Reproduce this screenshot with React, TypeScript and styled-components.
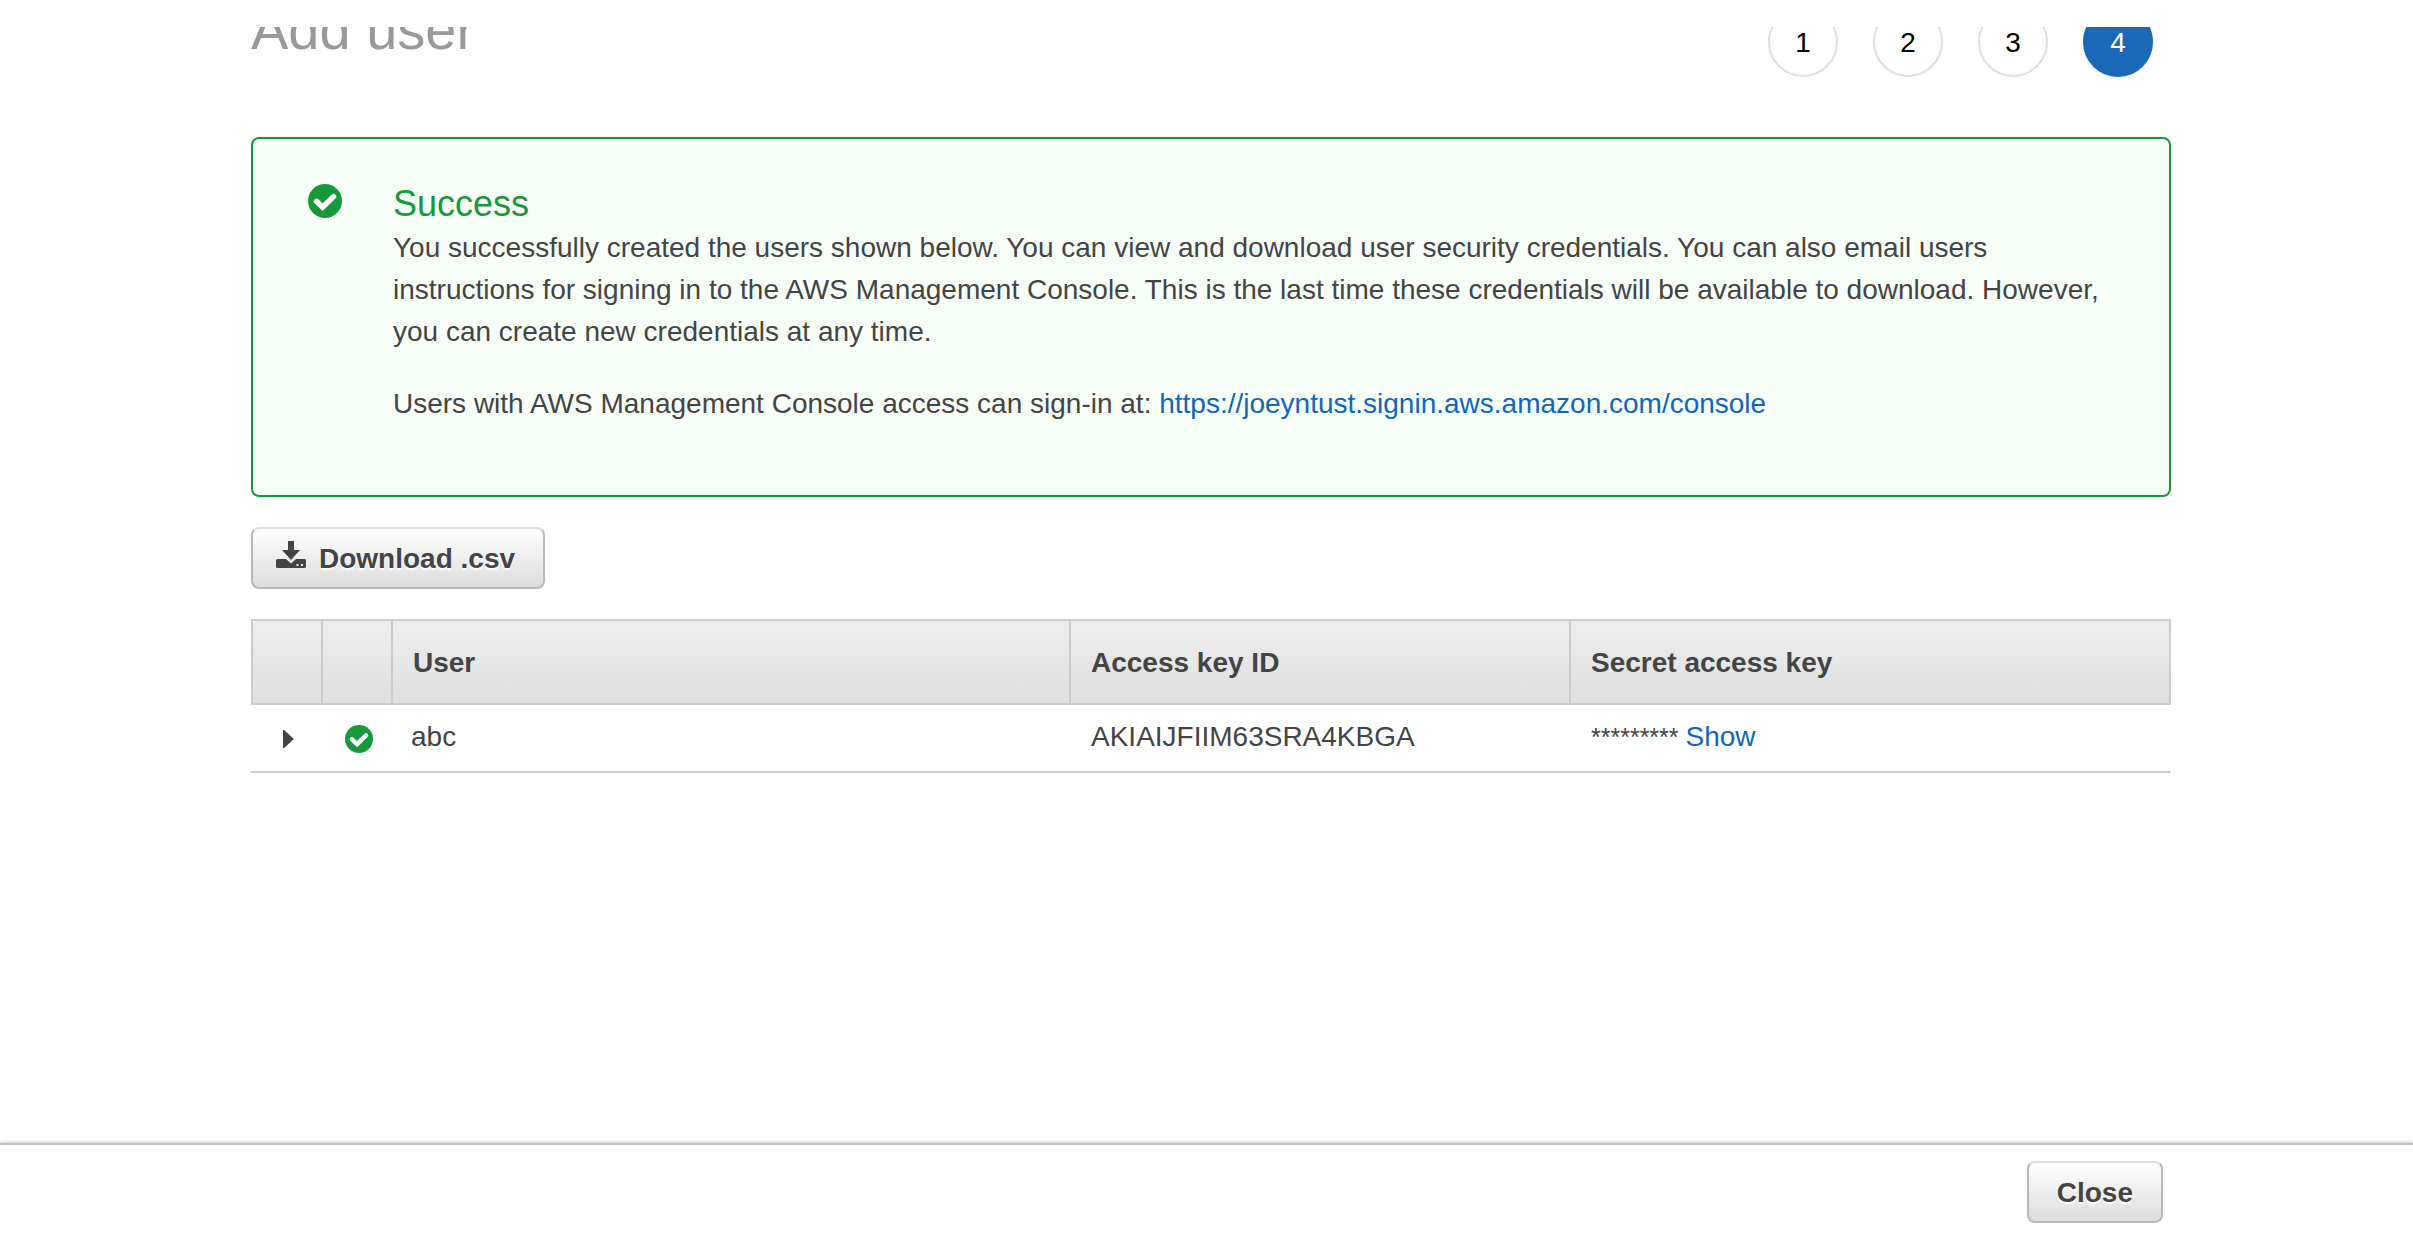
import React, { useState } from "react";
import styled, { createGlobalStyle, css } from "styled-components";

const color = {
  text: "#444444",
  link: "#1166bb",
  success: "#16993a",
  line: "#cccccc",
};

const GlobalStyle = createGlobalStyle`
  *, *::before, *::after { box-sizing: border-box; }
  body {
    margin: 0;
    background: #ffffff;
    color: ${color.text};
    font: 28px/42px "Liberation Sans", Arial, sans-serif;
  }
`;

const Page = styled.div`
  display: flex;
  flex-direction: column;
  height: 100vh;
  padding-top: 27px;
`;

const ScrollArea = styled.main`
  flex: 1;
  min-height: 0;
  overflow: hidden;
  padding: 0 242px 0 251px;
`;

const Header = styled.header`
  display: flex;
  justify-content: space-between;
  align-items: flex-start;
  margin-top: -20px;
  margin-bottom: 60px;
`;

const Title = styled.h1`
  margin: 0;
  color: #999999;
  font-size: 56px;
  font-weight: 400;
  line-height: 46px;
`;

const Steps = styled.ol`
  display: flex;
  gap: 35px;
  margin: 0;
  padding: 0 18px 0 0;
  list-style: none;
`;

const Step = styled.li<{ $active?: boolean }>`
  display: flex;
  align-items: center;
  justify-content: center;
  width: 70px;
  height: 70px;
  padding-top: 2px;
  border: 2px solid #e0e0e0;
  border-radius: 50%;
  color: #000000;
  ${(p) =>
    p.$active &&
    css`
      border-color: #1a69b9;
      background: #1a69b9;
      color: #ffffff;
    `}
`;

const Alert = styled.section`
  display: grid;
  grid-template-columns: 34px 1fr;
  column-gap: 51px;
  padding: 41px 40px 70px 55px;
  border: 2px solid ${color.success};
  border-radius: 8px;
  background: #f7fff8;
`;

const AlertIcon = styled.div`
  display: flex;
  padding-top: 4px;
  height: 38px;
`;

const AlertTitle = styled.h2`
  margin: 0;
  color: ${color.success};
  font-size: 36px;
  font-weight: 400;
  line-height: 47px;
`;

const Paragraph = styled.p`
  margin: 0;
  & + & {
    margin-top: 30px;
  }
`;

const Link = styled.a`
  color: ${color.link};
  text-decoration: none;
`;

const Button = styled.button`
  display: inline-flex;
  align-items: center;
  gap: 13px;
  height: 62px;
  padding: 2px 28px 0;
  border: 2px solid #b8b8b8;
  border-top-color: #dddddd;
  border-radius: 8px;
  background: linear-gradient(#ffffff, #dddddd);
  color: ${color.text};
  font: bold 28px/42px "Liberation Sans", Arial, sans-serif;
  text-shadow: 0 2px 2px #ffffff;
  cursor: pointer;
`;

const DownloadButton = styled(Button)`
  padding-left: 23px;
`;

const Toolbar = styled.div`
  display: flex;
  margin: 30px 0;
`;

const Table = styled.table`
  width: 100%;
  table-layout: fixed;
  border-collapse: separate;
  border-spacing: 0;
`;

const IconColumn = styled.col`
  width: 70px;
`;

const KeyColumn = styled.col`
  width: 500px;
`;

const SecretColumn = styled.col`
  width: 602px;
`;

const HeadRow = styled.tr`
  background: linear-gradient(#eeeeee, #dfdfdf);
`;

const HeadCell = styled.th`
  height: 86px;
  padding: 2px 20px 0;
  border: 2px solid ${color.line};
  border-right-width: 0;
  text-align: left;
  &:last-child {
    border-right-width: 2px;
  }
`;

const Cell = styled.td<{ $indent?: number }>`
  height: 68px;
  padding: 0 0 2px ${(p) => p.$indent ?? 22}px;
  border-bottom: 2px solid ${color.line};
`;

const Expander = styled.button`
  display: flex;
  padding: 4px 0 0;
  border: 0;
  background: none;
  color: ${color.text};
  cursor: pointer;
`;

const StatusIcon = styled.span`
  display: flex;
  padding-top: 4px;
`;

const Mask = styled.span`
  font-size: 25px;
`;

const ShowButton = styled.button`
  padding: 0;
  border: 0;
  background: none;
  color: ${color.link};
  font: inherit;
  cursor: pointer;
`;

const Footer = styled.footer`
  display: flex;
  justify-content: flex-end;
  height: 94px;
  padding: 16px 250px 0 0;
  border-top: 2px solid #c0c0c0;
  box-shadow: 0 -1px 3px rgba(0, 0, 0, 0.2);
`;

const CheckCircle = ({ size }: { size: number }) => (
  <svg width={size} height={size} viewBox="0 0 100 100" role="img" aria-label="Success">
    <circle cx="50" cy="50" r="50" fill={color.success} />
    <path d="M25 51L43 68L75 37" fill="none" stroke="#ffffff" strokeWidth="16" strokeLinecap="round" />
  </svg>
);

const DownloadIcon = () => (
  <svg width="30" height="36" viewBox="0 0 30 36" aria-hidden="true">
    <path
      fill={color.text}
      fillRule="evenodd"
      d="M12 0h6v9h6L15 19 6 9h6zM1.500 18H10l5 4.500 5-4.500h8.500Q30 18 30 19.500v6Q30 27 28.500 27h-27Q0 27 0 25.500v-6Q0 18 1.500 18zM20.500 23v2h2v-2zM25 23v2h2v-2z"
    />
  </svg>
);

export default function App() {
  const [shown, setShown] = useState(false);
  return (
    <>
      <GlobalStyle />
      <Page>
        <ScrollArea>
          <Header>
            <Title>Add user</Title>
            <Steps>
              <Step>1</Step>
              <Step>2</Step>
              <Step>3</Step>
              <Step $active aria-current="step">4</Step>
            </Steps>
          </Header>
          <Alert>
            <AlertIcon>
              <CheckCircle size={34} />
            </AlertIcon>
            <div>
              <AlertTitle>Success</AlertTitle>
              <Paragraph>
                You successfully created the users shown below. You can view and download user security
                credentials. You can also email users instructions for signing in to the AWS Management Console.
                This is the last time these credentials will be available to download. However, you can create
                new credentials at any time.
              </Paragraph>
              <Paragraph>
                Users with AWS Management Console access can sign-in at:{" "}
                <Link href="https://joeyntust.signin.aws.amazon.com/console">
                  https://joeyntust.signin.aws.amazon.com/console
                </Link>
              </Paragraph>
            </div>
          </Alert>
          <Toolbar>
            <DownloadButton type="button">
              <DownloadIcon />
              Download .csv
            </DownloadButton>
          </Toolbar>
          <Table>
            <colgroup>
              <IconColumn />
              <IconColumn />
              <col />
              <KeyColumn />
              <SecretColumn />
            </colgroup>
            <thead>
              <HeadRow>
                <HeadCell aria-label="Expand" />
                <HeadCell aria-label="Status" />
                <HeadCell scope="col">User</HeadCell>
                <HeadCell scope="col">Access key ID</HeadCell>
                <HeadCell scope="col">Secret access key</HeadCell>
              </HeadRow>
            </thead>
            <tbody>
              <tr>
                <Cell $indent={32}>
                  <Expander type="button" aria-label="Expand abc">
                    <svg width="11" height="18" viewBox="0 0 11 18" aria-hidden="true">
                      <path fill="currentColor" d="M0 0h1l10 9-10 9H0z" />
                    </svg>
                  </Expander>
                </Cell>
                <Cell $indent={24}>
                  <StatusIcon>
                    <CheckCircle size={28} />
                  </StatusIcon>
                </Cell>
                <Cell $indent={20}>abc</Cell>
                <Cell>AKIAIJFIIM63SRA4KBGA</Cell>
                <Cell>
                  <Mask>********* </Mask>
                  <ShowButton type="button" aria-pressed={shown} onClick={() => setShown(!shown)}>
                    Show
                  </ShowButton>
                </Cell>
              </tr>
            </tbody>
          </Table>
        </ScrollArea>
        <Footer>
          <Button type="button">Close</Button>
        </Footer>
      </Page>
    </>
  );
}
